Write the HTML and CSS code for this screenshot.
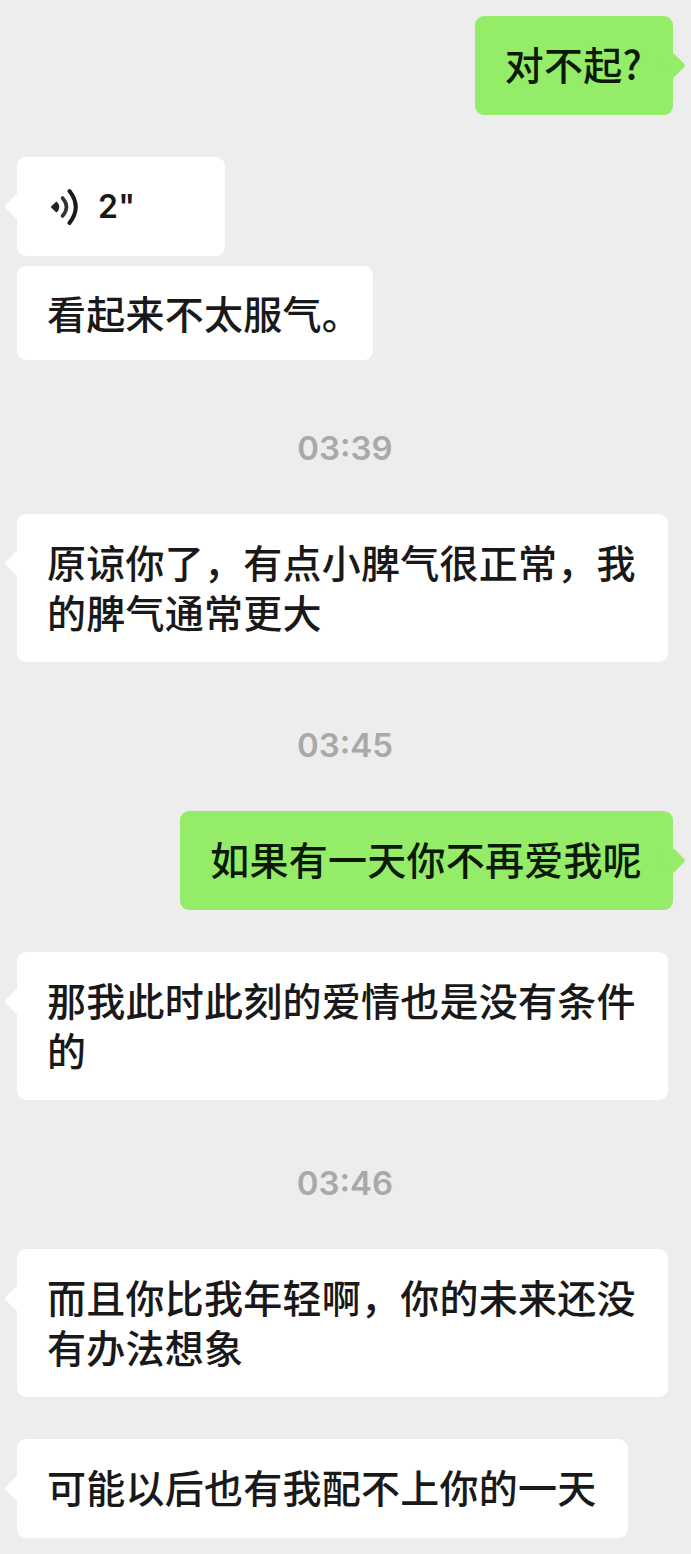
FILE: index.html
```html
<!DOCTYPE html>
<html lang="zh-CN">
<head>
  <meta charset="UTF-8">
  <meta name="viewport" content="width=device-width, initial-scale=1.0">
  <title>聊天记录</title>
  <link rel="stylesheet" href="styles.css">
</head>
<body>
  <main class="chat">
    <div class="bubble sent">对不起?</div>
    <div class="bubble voice">
      <svg class="voice-icon" width="30" height="38" viewBox="0 0 30 38">
        <path d="M4 19 L8.500 14.800 Q12 19 8.500 23.200 Z" fill="#222" stroke="#222" stroke-width="2" stroke-linejoin="round"/>
        <path d="M14.500 10 Q22.500 19 14.500 28" fill="none" stroke="#333" stroke-width="3.600" stroke-linecap="round"/>
        <path d="M21.500 3 Q34 19 21.500 35" fill="none" stroke="#191919" stroke-width="4" stroke-linecap="round"/>
      </svg>
      <span class="voice-length">2"</span>
    </div>
    <div class="bubble follow">看起来不太服气。</div>
    <time class="time">03:39</time>
    <div class="bubble long">原谅你了，有点小脾气很正常，我的脾气通常更大</div>
    <time class="time">03:45</time>
    <div class="bubble sent">如果有一天你不再爱我呢</div>
    <div class="bubble long">那我此时此刻的爱情也是没有条件的</div>
    <time class="time">03:46</time>
    <div class="bubble long">而且你比我年轻啊，你的未来还没有办法想象</div>
    <div class="bubble">可能以后也有我配不上你的一天</div>
  </main>
</body>
</html>
```

FILE: styles.css
```css
* {
  box-sizing: border-box;
}
body {
  margin: 0;
  background: #ededed;
  color: #191919;
  font-family: "Noto Sans CJK SC", sans-serif;
}
.chat {
  height: 1554px;
  padding: 16px 18px 0 17px;
  display: flex;
  flex-direction: column;
  align-items: flex-start;
}
.bubble {
  position: relative;
  flex: none;
  min-height: 99px;
  margin-bottom: 42px;
  padding: 22px 31px 26px 30px;
  border-radius: 9px;
  background: #fff;
  font-size: 39px;
  font-weight: 500;
  line-height: 50px;
  letter-spacing: 0.25px;
  white-space: nowrap;
}
/* little arrow on the side of the speaker */
.bubble::before {
  content: "";
  position: absolute;
  top: 40px;
  left: -9px;
  width: 19px;
  height: 19px;
  border-radius: 3px;
  background: inherit;
  transform: rotate(45deg);
}
.sent {
  align-self: flex-end;
  background: #95ec69;
  color: #0b1a05;
}
.sent::before {
  left: auto;
  right: -9px;
}
.voice {
  width: 208px;
  margin-bottom: 10px;
  padding-top: 24px;
  padding-bottom: 24px;
  padding-left: 31px;
  display: flex;
  align-items: center;
  gap: 20px;
}
.voice-length {
  font-family: Inter, sans-serif;
  font-size: 32px;
  font-weight: 600;
}
.follow {
  width: 356px;
  min-height: 94px;
  margin-bottom: 47px;
  padding-top: 21px;
  padding-bottom: 23px;
}
.follow::before {
  display: none;
}
.long {
  width: 651px;
  white-space: normal;
}
.time {
  flex: none;
  align-self: center;
  height: 64px;
  margin: 19px 0 24px;
  font-family: Inter, sans-serif;
  font-size: 33px;
  font-weight: 600;
  line-height: 44px;
  color: #a9a9a9;
}
```
